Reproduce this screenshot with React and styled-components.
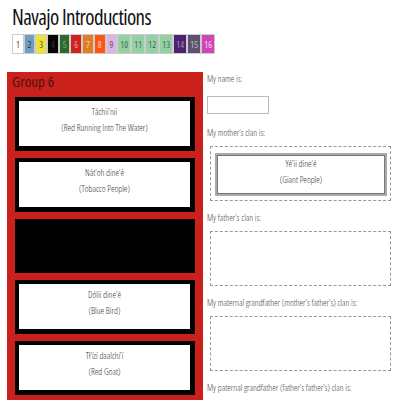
import styled, { createGlobalStyle } from 'styled-components';

const GlobalStyle = createGlobalStyle`
  body {
    margin: 0;
    background: #fff;
    font-family: "Open Sans", "Liberation Sans", sans-serif;
    font-stretch: 75%;
  }
`;

const swatches = [
  { n: 1, bg: '#ffffff', fg: '#555' },
  { n: 2, bg: '#6f9cbf', fg: '#334' },
  { n: 3, bg: '#eee23a', fg: '#555' },
  { n: 4, bg: '#050505', fg: '#333' },
  { n: 5, bg: '#2b6a2b', fg: '#8a8' },
  { n: 6, bg: '#cc2420', fg: '#f99' },
  { n: 7, bg: '#dd8024', fg: '#fcb' },
  { n: 8, bg: '#ff5512', fg: '#fcc' },
  { n: 9, bg: '#dcb4e2', fg: '#555' },
  { n: 10, bg: '#93d1a4', fg: '#465' },
  { n: 11, bg: '#93d1a4', fg: '#465' },
  { n: 12, bg: '#93d1a4', fg: '#465' },
  { n: 13, bg: '#93d1a4', fg: '#465' },
  { n: 14, bg: '#4a2470', fg: '#a8b' },
  { n: 15, bg: '#5f5270', fg: '#bbc' },
  { n: 16, bg: '#d045b5', fg: '#fde' },
];

const clans = [
  { name: 'Táchii’nii', meaning: '(Red Running Into The Water)' },
  { name: 'Nát’oh dine’é', meaning: '(Tobacco People)' },
  null,
  { name: 'Dólii dine’é', meaning: '(Blue Bird)' },
  { name: 'Tł’ízí daalchí’í', meaning: '(Red Goat)' },
];

const App = () => {
  return (
    <Page>
      <GlobalStyle />
      <Title>Navajo Introductions</Title>
      <Palette>
        {swatches.map((s) => (
          <Swatch key={s.n} $bg={s.bg} $fg={s.fg} $wide={s.n > 9}>
            {s.n}
          </Swatch>
        ))}
      </Palette>
      <Main>
        <Group>
          <GroupTitle>Group 6</GroupTitle>
          <CardList>
            {clans.map((c, i) => (
              <ClanCard key={i}>
                {c && (
                  <CardInner>
                    <span>{c.name}</span>
                    <span>{c.meaning}</span>
                  </CardInner>
                )}
              </ClanCard>
            ))}
          </CardList>
        </Group>
        <Form>
          <Label>My name is:</Label>
          <NameInput />
          <Label>My mother’s clan is:</Label>
          <DropZone>
            <PlacedCard>
              <span>Yé’ii dine’é</span>
              <span>(Giant People)</span>
            </PlacedCard>
          </DropZone>
          <Label>My father’s clan is:</Label>
          <DropZone />
          <Label>My maternal grandfather (mother’s father’s) clan is:</Label>
          <DropZone />
          <Label>My paternal grandfather (father’s father’s) clan is:</Label>
        </Form>
      </Main>
    </Page>
  );
};

const Page = styled.div`
  padding: 0 7px;
  height: 400px;
  overflow: hidden;
`;

const Title = styled.h1`
  margin: 5px 0 0 5px;
  font-size: 21px;
  font-weight: 400;
  line-height: 25px;
  letter-spacing: -0.6px;
  color: #111;
`;

const Palette = styled.div`
  display: flex;
  margin: 4px 0 0 5px;
  height: 20px;
`;

const Swatch = styled.div`
  width: ${(p) => (p.$wide ? '14px' : '11.7px')};
  background: ${(p) => p.$bg};
  color: ${(p) => p.$fg};
  border: 1px solid #ccc;
  box-sizing: border-box;
  display: flex;
  align-items: center;
  justify-content: center;
  font-size: 9px;
`;

const Main = styled.div`
  display: flex;
  gap: 4px;
  margin-top: 18px;
`;

const Group = styled.div`
  width: 196px;
  flex: none;
  background: #cb211c;
  padding: 0 8px 20px 8px;
  box-sizing: border-box;
`;

const GroupTitle = styled.h2`
  margin: 0 0 0 -3px;
  font-size: 15px;
  font-weight: 400;
  line-height: 19px;
  color: #4a1212;
`;

const CardList = styled.div`
  display: flex;
  flex-direction: column;
  gap: 7px;
  margin-top: 6px;
`;

const ClanCard = styled.div`
  height: 54px;
  background: #000;
  padding: 4px 5px 5px 4px;
  box-sizing: border-box;
`;

const CardInner = styled.div`
  height: 100%;
  background: #fff;
  display: flex;
  flex-direction: column;
  align-items: center;
  gap: 6px;
  padding-top: 6px;
  box-sizing: border-box;
  font-size: 9px;
  font-weight: 300;
  line-height: 10px;
  color: #333;
`;

const Form = styled.div`
  flex: 1;
  display: flex;
  flex-direction: column;
  align-items: flex-start;
  padding-right: 2px;
`;

const Label = styled.div`
  font-size: 9px;
  font-weight: 300;
  line-height: 12px;
  color: #444;
  margin-top: 1px;
`;

const NameInput = styled.input`
  width: 62px;
  height: 18px;
  box-sizing: border-box;
  border: 1px solid #bbb;
  margin: 11px 0 12px 0;
  padding: 0;
`;

const DropZone = styled.div`
  align-self: stretch;
  margin: 7px 0 10px 3px;
  height: 55px;
  box-sizing: border-box;
  border: 1px dashed #999;
  padding: 6px 3px 4px 4px;
`;

const PlacedCard = styled.div`
  height: 100%;
  box-sizing: border-box;
  border: 2px solid #aaa;
  box-shadow: inset 0 0 0 1px #777;
  display: flex;
  flex-direction: column;
  align-items: center;
  gap: 6px;
  padding-top: 4px;
  font-size: 9px;
  font-weight: 300;
  line-height: 10px;
  color: #333;
`;

export default App;
